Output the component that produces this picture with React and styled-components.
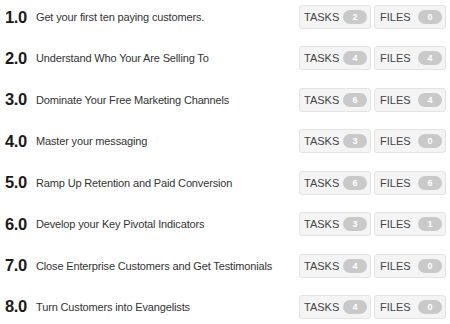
import React from 'react'
import styled, { createGlobalStyle } from 'styled-components'

const GlobalStyle = createGlobalStyle`
    body {
        margin: 0;
        background: #ffffff;
        font-family: "Liberation Sans", Arial, Helvetica, sans-serif;
    }
`

const steps = [
    { num: '1.0', title: 'Get your first ten paying customers.', tasks: 2, files: 0 },
    { num: '2.0', title: 'Understand Who Your Are Selling To', tasks: 4, files: 4 },
    { num: '3.0', title: 'Dominate Your Free Marketing Channels', tasks: 6, files: 4 },
    { num: '4.0', title: 'Master your messaging', tasks: 3, files: 0 },
    { num: '5.0', title: 'Ramp Up Retention and Paid Conversion', tasks: 6, files: 6 },
    { num: '6.0', title: 'Develop your Key Pivotal Indicators', tasks: 3, files: 1 },
    { num: '7.0', title: 'Close Enterprise Customers and Get Testimonials', tasks: 4, files: 0 },
    { num: '8.0', title: 'Turn Customers into Evangelists', tasks: 4, files: 0 },
]

function App() {
    return (
        <>
            <GlobalStyle />
            <List>
                {steps.map(step => (
                    <Row key={step.num}>
                        <Num>{step.num}</Num>
                        <Title>{step.title}</Title>
                        <Counters>
                            <Counter>
                                <Label>TASKS</Label>
                                <Pill>{step.tasks}</Pill>
                            </Counter>
                            <Counter wide>
                                <Label>FILES</Label>
                                <Pill>{step.files}</Pill>
                            </Counter>
                        </Counters>
                    </Row>
                ))}
            </List>
        </>
    )
}

export default App

const List = styled.div`
    display: flex;
    flex-direction: column;
    width: 450px;
`

const Row = styled.div`
    display: flex;
    align-items: center;
    height: 41.43px;
    padding: 0 4px 7.4px 5px;
    box-sizing: border-box;
`

const Num = styled.span`
    width: 31px;
    flex-shrink: 0;
    font-size: 16.5px;
    font-weight: bold;
    color: #1a1a1a;
    letter-spacing: -0.4px;
`

const Title = styled.span`
    flex: 1;
    font-size: 11px;
    letter-spacing: -0.15px;
    color: #333;
    white-space: nowrap;
`

const Counters = styled.div`
    display: flex;
    gap: 3px;
`

const Counter = styled.div`
    display: flex;
    align-items: center;
    justify-content: space-between;
    width: 72px;
    height: 24px;
    box-sizing: border-box;
    padding: 0 3px 0 ${p => (p.wide ? '5px' : '4px')};
    background: #f4f4f4;
    border: 1px solid #e3e3e3;
    border-radius: 3px;
`

const Label = styled.span`
    font-size: 11px;
    color: #444;
`

const Pill = styled.span`
    display: flex;
    align-items: center;
    justify-content: center;
    width: 24px;
    height: 14px;
    border-radius: 7px;
    background: #c9c9c9;
    color: #fff;
    font-size: 9px;
    font-weight: bold;
`
